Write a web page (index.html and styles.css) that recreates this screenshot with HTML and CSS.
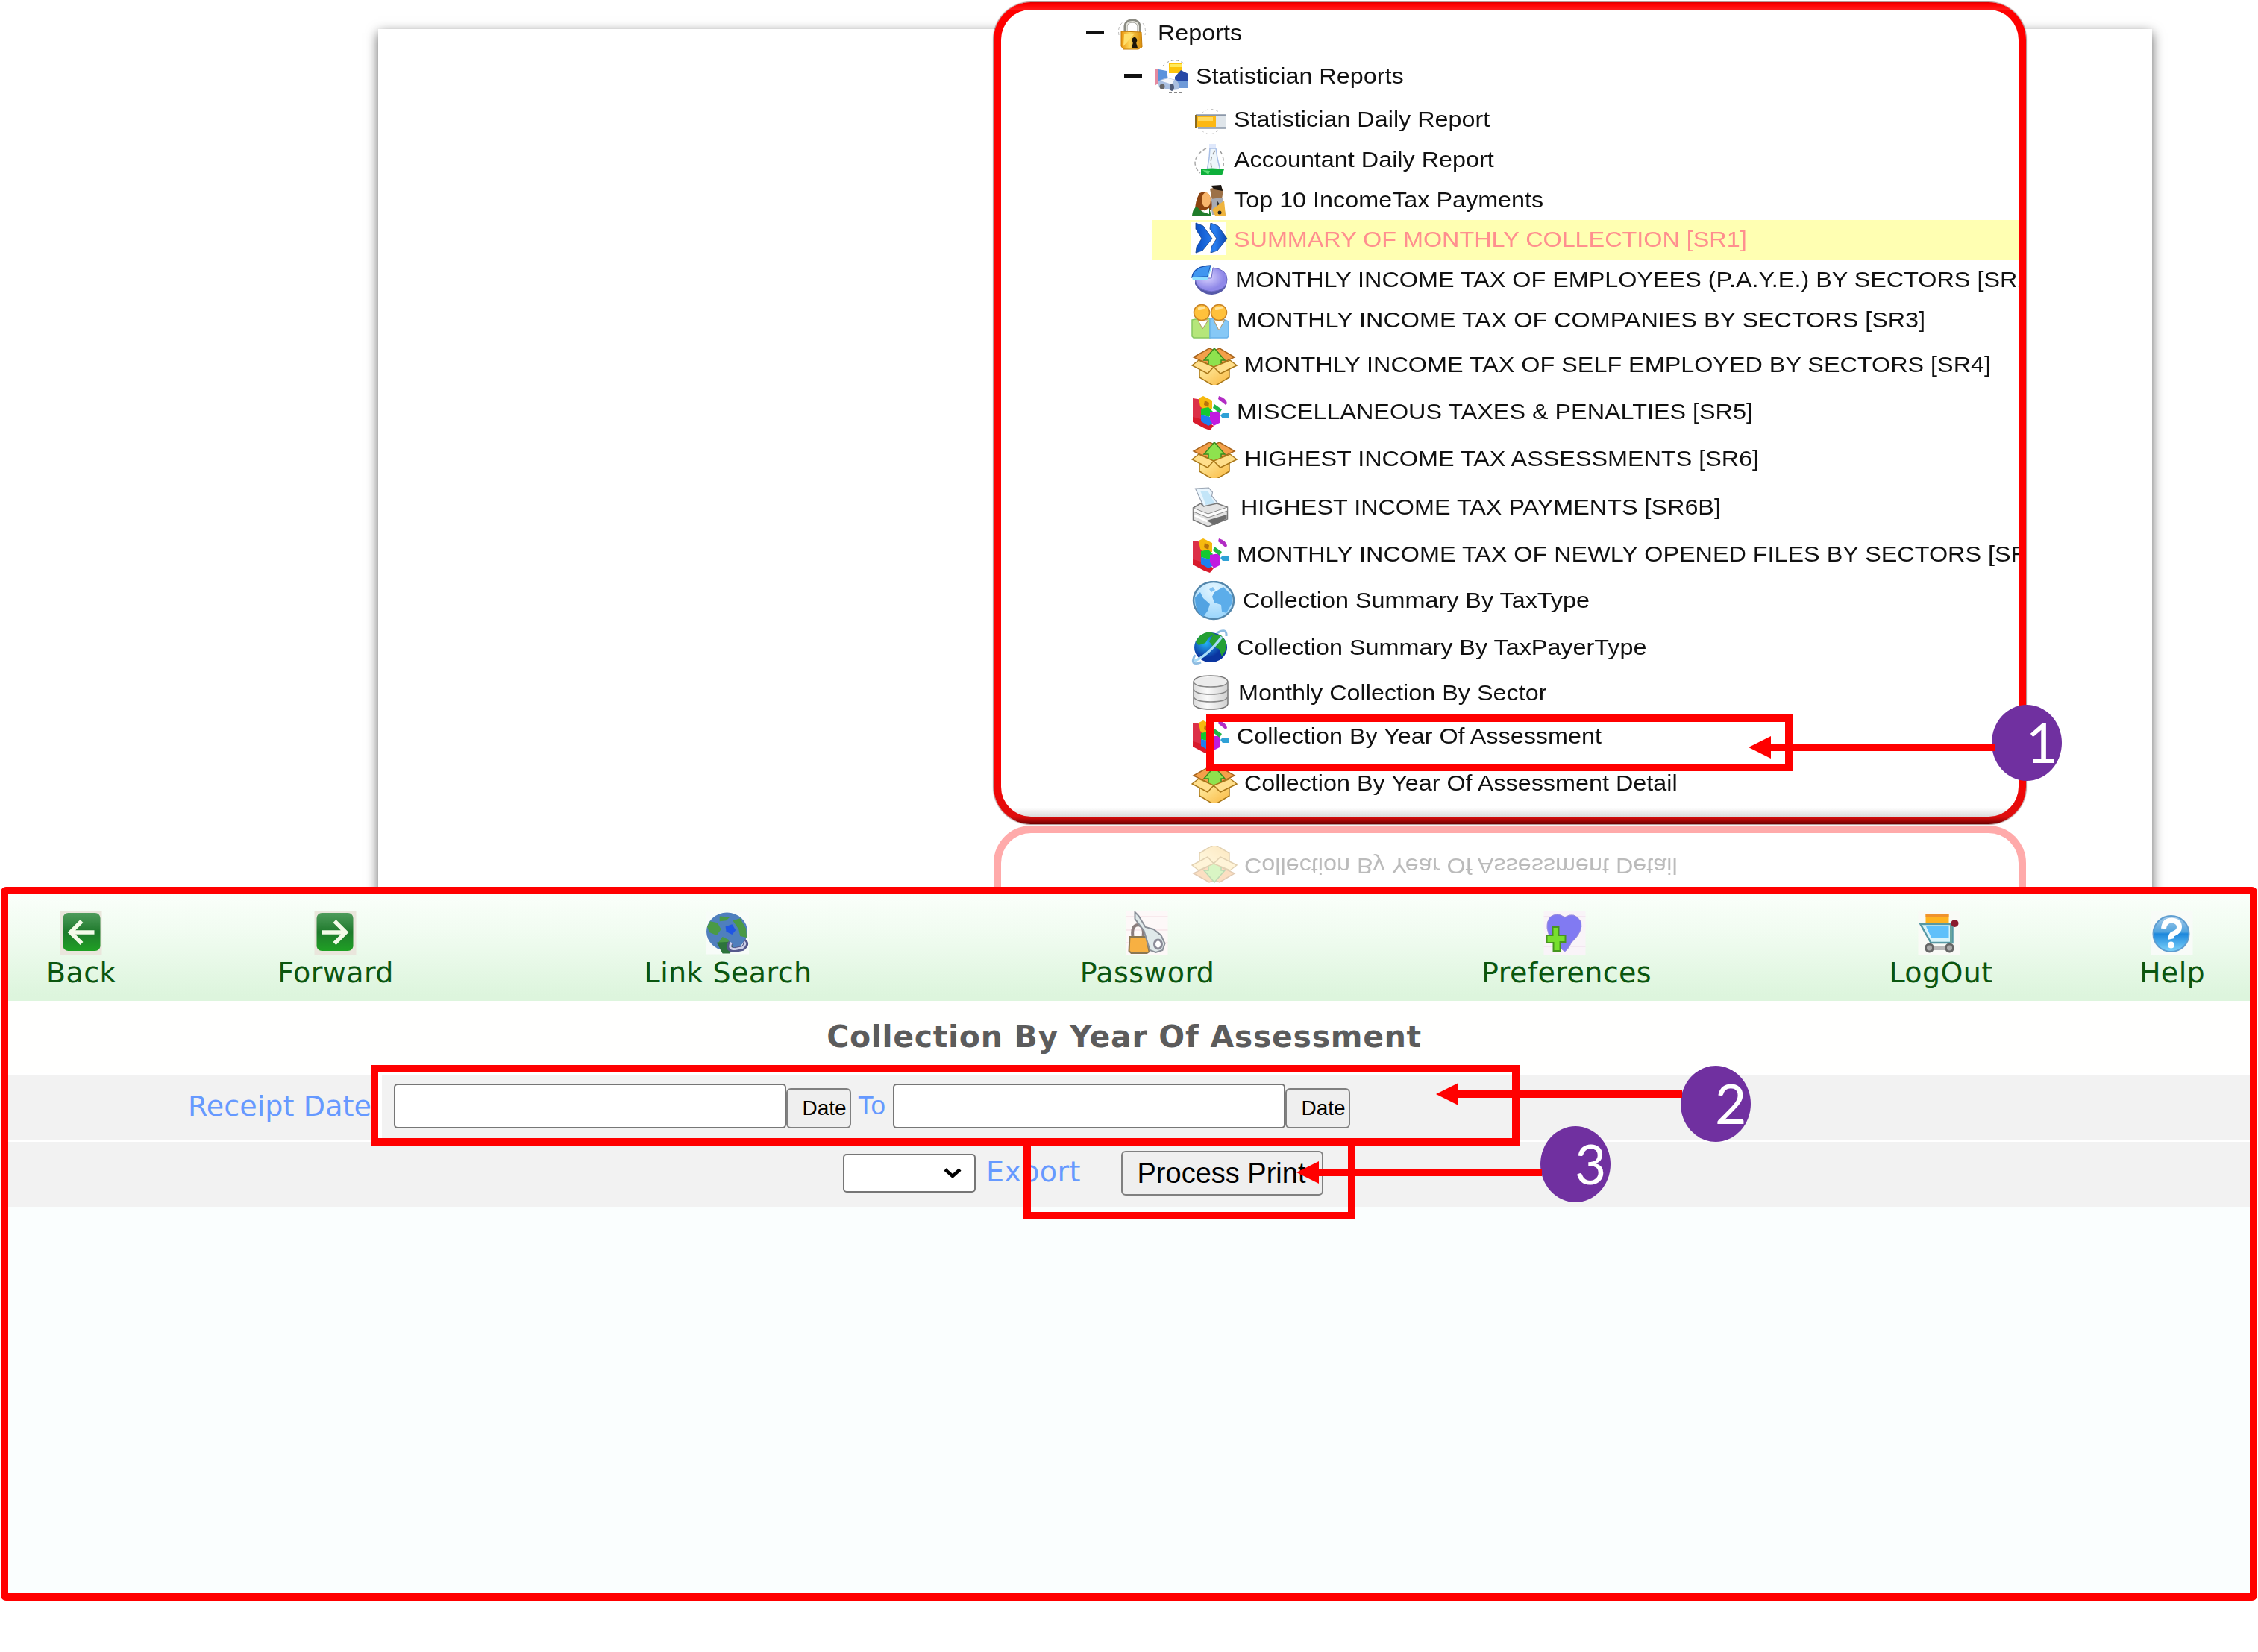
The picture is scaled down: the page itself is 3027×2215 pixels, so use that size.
FILE: index.html
```html
<!DOCTYPE html>
<html lang="en">
<head>
<meta charset="utf-8">
<title>Collection By Year Of Assessment</title>
<link rel="stylesheet" href="styles.css">
</head>
<body>
<svg class="defs" width="0" height="0" aria-hidden="true">
  <defs>
    <linearGradient id="gold" x1="0" x2="1"><stop offset="0" stop-color="#e9930c"/><stop offset=".4" stop-color="#ffd75a"/><stop offset="1" stop-color="#d98a06"/></linearGradient>
    <linearGradient id="box" x1="0" y1="0" x2="1" y2="1"><stop offset="0" stop-color="#fff0a8"/><stop offset="1" stop-color="#f9b53c"/></linearGradient>
    <linearGradient id="blue" x1="0" y1="0" x2="1" y2="0"><stop offset="0" stop-color="#0a4fc4"/><stop offset=".6" stop-color="#2a7ff0"/><stop offset="1" stop-color="#0b46b0"/></linearGradient>
    <radialGradient id="pie" cx=".4" cy=".4"><stop offset="0" stop-color="#d9d2ff"/><stop offset="1" stop-color="#8f88e8"/></radialGradient>
    <radialGradient id="sky" cx=".5" cy=".2" r=".9"><stop offset="0" stop-color="#e4f6ff"/><stop offset="1" stop-color="#8fd0fb"/></radialGradient>
    <radialGradient id="sea" cx=".35" cy=".35"><stop offset="0" stop-color="#27b4f5"/><stop offset="1" stop-color="#0a35a0"/></radialGradient>
    <linearGradient id="drum"><stop offset="0" stop-color="#dcdcdc"/><stop offset=".4" stop-color="#fafafa"/><stop offset="1" stop-color="#cfcfcf"/></linearGradient>
    <linearGradient id="green" x1="0" y1="0" x2="0" y2="1"><stop offset="0" stop-color="#4f9c5c"/><stop offset=".5" stop-color="#1f7a2c"/><stop offset="1" stop-color="#1fa024"/></linearGradient>
    <linearGradient id="help" x1="0" y1="0" x2="0" y2="1"><stop offset="0" stop-color="#a9cdea"/><stop offset=".45" stop-color="#4fa2de"/><stop offset=".5" stop-color="#1c87dc"/><stop offset="1" stop-color="#7fd4fb"/></linearGradient>
  </defs>
  <symbol id="i-lock" viewBox="0 0 40 54">
    <path d="M11 28V18Q12 11 20 11T29 18V28" fill="none" stroke="#8b8b83" stroke-width="5"/><path d="M12 27V18Q13 12 20 12T28 18V27" fill="none" stroke="#e4e4dc" stroke-width="2"/>
    <path d="M2 30Q0 18 7 13M34 14q5 8 3 16" fill="none" stroke="#bbb" stroke-dasharray="4 3"/>
    <path d="M5 25l27 1 1 20-5 3H8l-3-4z" fill="url(#gold)" stroke="#c47d08"/><path d="M8 45l14-16h-13z" fill="#ffdf6c"/>
    <path d="M22 33a4 4 0 0 1 3 7l2 7h-8l2-7a4 4 0 0 1 1-7z" fill="#1d1608"/>
  </symbol>
  <symbol id="i-car" viewBox="0 0 48 54">
    <path d="M11 14Q25 0 40 10" fill="none" stroke="#999" stroke-dasharray="4 3"/><path d="M20 9h18v14H20z" fill="#fcc40c"/><path d="M22 11h15v4H22z" fill="#ffe95c"/>
    <path d="M1 17l16 3 2 12-15 6z" fill="#5b93dc"/><path d="M1 18h4v19l-4 3z" fill="#e58aa0"/>
    <path d="M28 28l8-9 10 5v16H28z" fill="#2748a6"/><path d="M31 33h15v10H31z" fill="#6f9ad8"/><path d="M5 34l11-5 14 3 3 5v8l-9 1-17-4z" fill="#a9bfe0"/><path d="M8 33l11-3 8 2-3 6z" fill="#f5f8fc"/>
    <circle cx="11" cy="41" r="3.500" fill="#666"/><ellipse cx="24" cy="42" rx="3" ry="5" fill="#4d5a77"/><path d="M20 49h22" stroke="#888" stroke-dasharray="4 3" stroke-width="2"/>
  </symbol>
  <symbol id="i-card" viewBox="0 0 48 54">
    <path d="M14 19Q24 9 37 17M14 42Q26 52 36 41" fill="none" stroke="#bbb" stroke-dasharray="3 4"/>
    <rect x="6" y="21" width="41" height="18" fill="#dfe5ea"/><path d="M6 21.500h41M9 38.500h38" stroke="#8b97a8" stroke-width="2.500"/><rect x="7" y="23" width="26" height="14" fill="#fdb813"/><path d="M9 24h20v5H9z" fill="#ffd95e"/><path d="M6 21v17" stroke="#8b6b20" stroke-width="2"/>
  </symbol>
  <symbol id="i-flask" viewBox="0 0 48 54">
    <path d="M20 12Q5 20 5 32q1 8 7 13" fill="none" stroke="#aaa" stroke-width="1.500" stroke-dasharray="5 3"/><path d="M24 6h9v7h-9z" fill="#dfe8fb"/><path d="M25 12l-1 13-3 17h18l-4-17-2-13z" fill="#eef6fb" stroke="#a9bfe6" stroke-width="1.500"/><path d="M32 15q-9 12-4 24M38 15q6 6 5 20" stroke="#999" stroke-width="1.500" fill="none" stroke-dasharray="6 3"/>
    <path d="M13 40q14-3 31 0l-3 8H13z" fill="#0eaf3b"/><path d="M15 41l10 1-2 5z" fill="#5ade75"/>
  </symbol>
  <symbol id="i-people" viewBox="0 0 48 54">
    <path d="M25 12l14-3 4 5-2 12-13 2z" fill="#9c7147"/><path d="M26 8l14-1 2 8-11-2z" fill="#1c1712"/><path d="M25 26l17-2 4 23H28z" fill="#a7aab2"/><path d="M34 27l4 6-3 10z" fill="#333"/>
    <path d="M11 18q7-4 13 2 5 9 3 20l-22 2q0-13 6-24z" fill="#8c4310"/><ellipse cx="20" cy="27" rx="6" ry="10" fill="#f8b66c"/><path d="M1 48q1-9 6-12l8 7 9-5 3 10z" fill="#1f7c2a"/><path d="M15 43l5-3 4-2v8z" fill="#fff"/><path d="M28 40l16-12 2 20H32z" fill="#efb43e"/><circle cx="38" cy="44" r="2.500" fill="#222"/>
  </symbol>
  <symbol id="i-chevrons" viewBox="0 0 48 54">
    <path d="M0 4h47v44H0z" fill="#fff"/><path d="M6 5l10 4 12 17-13 16-9 3 1-8 7-11-8-13zM26 5l10 4 12 17-13 16-9 3 1-8 7-11-9-13z" fill="url(#blue)" stroke="#123e88" stroke-width=".8"/>
  </symbol>
  <symbol id="i-pie" viewBox="0 0 50 54">
    <path d="M5 28v5q8 14 23 14 20-2 20-20v-4z" fill="#5659a8"/><path d="M29 11q19 2 19 16 0 14-21 16Q6 41 5 25h22z" fill="url(#pie)" stroke="#6d6bc4"/><path d="M1 24Q3 9 26 8l-4 15z" fill="#3f96f0" stroke="#1c50ae" stroke-width="1.500"/><path d="M1 24l21-1 4-14v6l-4 12-20 1z" fill="#8fe0ff"/>
  </symbol>
  <symbol id="i-pair" viewBox="0 0 52 54">
    <path d="M1 27l10-2h14v26H3l-2-2z" fill="#b5e67a" stroke="#86c860" stroke-width="1.500" /><path d="M25 25h15l10 4v20l-2 2H25z" fill="#86c8f6" stroke="#69b2ea" stroke-width="1.500"/><path d="M9 27l6 12 8-12zM30 27l7 14 8-14z" fill="#fff" stroke="#b0925e"/>
    <circle cx="14" cy="17" r="10.500" fill="#ffc13c" stroke="#c98324" stroke-width="1.500"/><circle cx="37" cy="17" r="10.500" fill="#ffc13c" stroke="#c98324" stroke-width="1.500"/><path d="M9 12l10-2M32 12l10-2" stroke="#ffe39a" stroke-width="3"/>
  </symbol>
  <symbol id="i-box" viewBox="0 0 62 54">
    <path d="M3 17l21-12 7 3 7-3 20 12-28 13z" fill="#f3a04a" stroke="#a8641c" stroke-width="1.500"/><path d="M11 28h40v16L31 56 11 44z" fill="url(#box)" stroke="#a97718" stroke-width="1.500"/>
    <path d="M31 5L45 21h-5v10H23V21h-6z" fill="#8ee24e" stroke="#3b8a1e" stroke-width="1.500"/><path d="M1 28l9-7 20 9-8 9zM61 28l-9-7-22 9 9 9z" fill="#ffdf8c" stroke="#a97718" stroke-width="1.500"/>
  </symbol>
  <symbol id="i-blocks" viewBox="0 0 52 54">
    <path d="M2 9l13 2v36L2 40z" fill="#dc3048"/><path d="M2 34l18 5 10 7-5 6-8-3-15-8z" fill="#d81a2c"/><path d="M10 9l6-3 12 6v12l-8 3-8-7z" fill="#f6b90e"/><path d="M18 12l6 3-1 6-6-3z" fill="#b5720c"/><path d="M13 23l10-2 6 6-5 7-11-3z" fill="#14c930"/><path d="M13 31l12 3 5 8-7 4-10-6z" fill="#1e7ff0"/><path d="M25 28l13-2v16l-8 4-5-8z" fill="#c01be0"/><path d="M31 17l10 7-3 5-9-7z" fill="#20b648"/><path d="M37 6q10 3 11 10l-2 2-10-8z" fill="#b22cc4"/><path d="M42 29h9v7h-9l-3-4z" fill="#2fa1d6"/>
  </symbol>
  <symbol id="i-printer" viewBox="0 0 56 54">
    <path d="M5 2l18-1 5 6-1 5 9 11-19 5z" fill="#eaf6fe" stroke="#9aa5b4" stroke-width="1.200"/><path d="M12 6h10l9 16-12 2z" fill="#c3e5f8"/><path d="M2 28l10-6 4 4 18-4 14 5v16L22 53 2 44z" fill="#e3e3e3" stroke="#777" stroke-width="1.500"/><path d="M2 28l20 8 26-9v5l-26 9L2 33z" fill="#fafafa" stroke="#888"/><path d="M20 45l27-8v5L31 51z" fill="#6d6d6d"/><path d="M4 38l17 8" stroke="#fff" stroke-width="3"/>
  </symbol>
  <symbol id="i-globe" viewBox="0 0 60 54">
    <ellipse cx="30" cy="27" rx="27" ry="25" fill="url(#sky)" stroke="#5487ac" stroke-width="2.500"/><path d="M5 23l7-7 4 8 9 8-3 9-6 8Q5 42 5 23z" fill="#52a3e2"/><path d="M31 16l12-7 11 11 1 10-8 14-6-2-1-9-9-3-3-8z" fill="#5cadea"/><path d="M24 12l5-3 3 4-5 3z" fill="#7fc0f2"/>
  </symbol>
  <symbol id="i-planet" viewBox="0 0 52 54">
    <ellipse cx="26" cy="27" rx="22" ry="20" fill="url(#sea)"/><path d="M6 20q5-12 18-14l8 3-9 5-4 7-9 3zM30 9l10 2 7 9-1 11-5 8-4-10-8-3-5-7z" fill="#25a034"/><path d="M4 45Q20 40 41 13" fill="none" stroke="#a9dcf7" stroke-width="3.500"/><path d="M5 37Q-3 53 13 47M34 8q14-8 13 4" fill="none" stroke="#8fbde2" stroke-width="3"/>
  </symbol>
  <symbol id="i-db" viewBox="0 0 54 54">
    <path d="M3 12Q5 4 26 4t23 8v30q-2 7-23 7T3 42z" fill="url(#drum)" stroke="#777" stroke-width="1.500"/><path d="M3 12q2 7 23 7t23-7M3 22q2 7 23 7t23-7M3 32q2 7 23 7t23-7" fill="none" stroke="#888" stroke-width="1.500"/><ellipse cx="26" cy="12" rx="22" ry="6" fill="#ececec"/>
  </symbol>
</svg>

<main class="page">
  <section class="stage">
    <div class="sheet"></div>
    <div class="tree-column">
      <nav class="panel">
        <ul class="tree">
          <li class="node level-1"><i class="minus"></i><svg class="icon w40"><use href="#i-lock"/></svg><span class="label">Reports</span></li>
          <li class="node level-2"><i class="minus"></i><svg class="icon w48"><use href="#i-car"/></svg><span class="label">Statistician Reports</span></li>
          <li class="node"><svg class="icon w48"><use href="#i-card"/></svg><span class="label">Statistician Daily Report</span></li>
          <li class="node"><svg class="icon w48"><use href="#i-flask"/></svg><span class="label">Accountant Daily Report</span></li>
          <li class="node"><svg class="icon w48"><use href="#i-people"/></svg><span class="label">Top 10 IncomeTax Payments</span></li>
          <li class="node selected"><svg class="icon w48"><use href="#i-chevrons"/></svg><span class="label">SUMMARY OF MONTHLY COLLECTION [SR1]</span></li>
          <li class="node"><svg class="icon w50"><use href="#i-pie"/></svg><span class="label">MONTHLY INCOME TAX OF EMPLOYEES (P.A.Y.E.) BY SECTORS [SR2]</span></li>
          <li class="node"><svg class="icon w52"><use href="#i-pair"/></svg><span class="label">MONTHLY INCOME TAX OF COMPANIES BY SECTORS [SR3]</span></li>
          <li class="node"><svg class="icon w62"><use href="#i-box"/></svg><span class="label">MONTHLY INCOME TAX OF SELF EMPLOYED BY SECTORS [SR4]</span></li>
          <li class="node"><svg class="icon w52"><use href="#i-blocks"/></svg><span class="label">MISCELLANEOUS TAXES &amp; PENALTIES [SR5]</span></li>
          <li class="node"><svg class="icon w62"><use href="#i-box"/></svg><span class="label">HIGHEST INCOME TAX ASSESSMENTS [SR6]</span></li>
          <li class="node"><svg class="icon w56"><use href="#i-printer"/></svg><span class="label">HIGHEST INCOME TAX PAYMENTS [SR6B]</span></li>
          <li class="node"><svg class="icon w52"><use href="#i-blocks"/></svg><span class="label">MONTHLY INCOME TAX OF NEWLY OPENED FILES BY SECTORS [SR7]</span></li>
          <li class="node"><svg class="icon w60"><use href="#i-globe"/></svg><span class="label">Collection Summary By TaxType</span></li>
          <li class="node"><svg class="icon w52"><use href="#i-planet"/></svg><span class="label">Collection Summary By TaxPayerType</span></li>
          <li class="node"><svg class="icon w54"><use href="#i-db"/></svg><span class="label">Monthly Collection By Sector</span></li>
          <li class="node"><svg class="icon w52"><use href="#i-blocks"/></svg><span class="label">Collection By Year Of Assessment</span></li>
          <li class="node"><svg class="icon w62"><use href="#i-box"/></svg><span class="label">Collection By Year Of Assessment Detail</span></li>
        </ul>
      </nav>
      <div class="reflection" aria-hidden="true">
        <div class="panel-mirror">
          <div class="node"><svg class="icon w62"><use href="#i-box"/></svg><span class="label">Collection By Year Of Assessment Detail</span></div>
        </div>
      </div>
    </div>
  </section>

  <section class="window">
    <nav class="toolbar">
      <a class="tool"><svg class="tool-icon" viewBox="0 0 56 58"><path d="M0 0h56v58H0z" fill="#eae6dc"/><rect x="4" y="2" width="50" height="51" rx="7" fill="url(#green)"/><path d="M46 28H15M29 13L14 28l15 15" fill="none" stroke="#f4fbe9" stroke-width="5.500"/></svg><span>Back</span></a>
      <a class="tool"><svg class="tool-icon" viewBox="0 0 56 58"><path d="M0 0h56v58H0z" fill="#eae6dc"/><rect x="3" y="2" width="49" height="51" rx="7" fill="url(#green)"/><path d="M10 28h32M27 13l15 15-15 15" fill="none" stroke="#f4fbe9" stroke-width="5.500"/></svg><span>Forward</span></a>
      <a class="tool"><svg class="tool-icon" viewBox="0 0 58 58"><path d="M0 0h58v58H0z" fill="#f7fcf8"/><ellipse cx="28" cy="27" rx="28" ry="26" fill="#4f7fbd"/><path d="M5 13l10 2 5 9-6 8-10-4-3-8zM18 6l14 1-5 5-9 1zM36 12l10-3 8 14 1 12-9-2-2-9zM22 34l8 4 4 11-12 2-7-7z" fill="#4a9a46"/><path d="M26 20l9-3 5 8-5 6-8-4z" fill="#1f55e4"/><path d="M14 42l18-1 5 8-5 8H22z" fill="#2d743c"/><path d="M33 42q-6 10 6 10l10-2q8-6 2-10" fill="none" stroke="#56598c" stroke-width="7"/><path d="M34 42q-5 9 5 9l10-2q6-5 2-8" fill="none" stroke="#cfd2ea" stroke-width="3"/></svg><span>Link Search</span></a>
      <a class="tool"><svg class="tool-icon" viewBox="0 0 56 58"><path d="M0 0h56v58H0z" fill="#fdf8f8"/><path d="M0 7h56M0 25h56M0 42h56" stroke="#f3dbe1"/><path d="M9 33q-2-15 8-15 8 2 6 15" fill="none" stroke="#8b7d7d" stroke-width="4"/><path d="M5 34h22l4 20-3 2H7l-3-3z" fill="#f7b042" stroke="#8a7752" stroke-width="2"/><path d="M12 1l5 5 9 15 11 3 10 8 5 11-3 9-9 3-8-3-8-26-12-16z" fill="#e0e9ea" stroke="#8a8f98" stroke-width="2"/><ellipse cx="43" cy="44" rx="5" ry="6" fill="#fff" stroke="#8b8b98" stroke-width="3"/></svg><span>Password</span></a>
      <a class="tool"><svg class="tool-icon shift" viewBox="0 0 56 58"><path d="M0 0h56v58H0z" fill="#f9f4f8"/><path d="M0 7h56M0 47h56" stroke="#eed9ea"/><path d="M28 8Q18 0 8 8q-9 13 4 32l16 14q4-2 9-12 16-15 13-28Q41-1 28 8z" fill="#817af2" stroke="#9c8edc"/><path d="M12 21h8v11h9v9h-7v12h-9V42H4V32h8z" fill="#78e02e" stroke="#47951f" stroke-width="2"/></svg><span>Preferences</span></a>
      <a class="tool"><svg class="tool-icon shift" viewBox="0 0 56 58"><path d="M0 0h56v58H0z" fill="#f9faf6"/><path d="M10 4h31v13H10z" fill="#ffb320"/><path d="M10 4h31v3H10z" fill="#ef922d"/><path d="M3 17h43v25H17z" fill="#d8f4fa" stroke="#5698a4" stroke-width="2.500"/><path d="M10 19h31v17H18z" fill="#5fc0fa"/><path d="M44 43V18" stroke="#6aa4a0" stroke-width="3"/><circle cx="49" cy="16" r="5" fill="#8b1a2e"/><path d="M16 46h26v6H16z" fill="#b8b8b8"/><circle cx="15" cy="49" r="5" fill="#aaa" stroke="#666" stroke-width="3"/><circle cx="42" cy="49" r="5" fill="#aaa" stroke="#666" stroke-width="3"/></svg><span>LogOut</span></a>
      <a class="tool"><svg class="tool-icon" viewBox="0 0 56 58"><path d="M0 0h56v58H0z" fill="#f8fbf8"/><ellipse cx="27" cy="30" rx="24" ry="24" fill="url(#help)" stroke="#5e9dd0" stroke-width="2"/><path d="M17 23q1-11 11-11 10 1 10 9 0 6-8 9-4 2-3 7" fill="none" stroke="#fff" stroke-width="7"/><circle cx="27" cy="45" r="4.500" fill="#fff"/></svg><span>Help</span></a>
    </nav>
    <h1 class="title">Collection By Year Of Assessment</h1>
    <form class="filters">
      <div class="filter-row date-row">
        <label class="field-label">Receipt Date</label>
        <div class="date-cell">
          <input class="date-input" type="text"><button class="date-button" type="button">Date</button>
          <span class="to">To</span>
          <input class="date-input" type="text"><button class="date-button" type="button">Date</button>
        </div>
      </div>
      <div class="filter-row export-row">
        <div class="select"><svg viewBox="0 0 26 16" width="26" height="16"><path d="M3 3l10 9L23 3" fill="none" stroke="#000" stroke-width="4.500"/></svg></div>
        <label class="export">Export</label>
        <button class="print-button" type="button">Process Print</button>
      </div>
    </form>
  </section>

  <!-- Step annotations over both screens -->
  <div class="marker mark-3"></div>
  <div class="marker mark-2"></div>
  <div class="marker mark-1"></div>
  <div class="step step-1">1</div>
  <div class="step step-2">2</div>
  <div class="step step-3">3</div>
  <div class="arrow arrow-1"></div>
  <div class="arrow arrow-2"></div>
  <div class="arrow arrow-3"></div>
</main>
</body>
</html>
```
FILE: styles.css
```css
* { box-sizing: border-box; }
body { margin: 0; background: #fff; font-family: "Liberation Sans", Arial, sans-serif; }
.defs { position: absolute; }
symbol { overflow: visible; }
.page { position: relative; width: 3027px; height: 2215px; overflow: hidden; }

/* Report tree */
.stage { display: grid; height: 1189px; overflow: hidden; }
.sheet { grid-area: 1 / 1; width: 2378px; height: 1300px; margin: 39px 0 0 507px; background: #fff; box-shadow: 0 5px 15px rgba(0, 0, 0, .62); }
.tree-column { grid-area: 1 / 1; width: 1384px; margin: 3px 0 0 1332px; }
.panel {
  height: 1102px; border: 10px solid transparent; border-radius: 50px; overflow: hidden;
  background:
    linear-gradient(#fff 0, #fff calc(100% - 12px), #dcdcdc) padding-box,
    linear-gradient(#d00 0, #f00 3px, #ff1c1c 10px, #f00 11px, #f00 1030px, #de0d0d 1092px, #c00b0b 1095px, #6c0000 1102px) border-box;
  box-shadow: 0 0 1px 1px rgba(90, 30, 30, .5);
}
.tree {
  display: grid; margin: 0; padding: 4px 0 0; list-style: none;
  grid-template-rows: 58.3px 58.3px 54px 53.7px 53.3px 53.7px 53.7px 60.6px 62.7px 62.7px 65.3px 62.7px 62.6px 62.4px 61px 58.3px 63px 54px;
}
.node {
  display: flex; align-items: center; gap: 9px; height: 53.4px; margin-left: 203px; padding-left: 52px;
  color: #111; font-size: 30px; white-space: nowrap; overflow: hidden;
}
.level-1 { margin-left: 114px; padding-left: 0; gap: 18px; }
.level-2 { margin-left: 165px; padding-left: 0; gap: 8px; }
.level-2 .minus { margin-right: 8px; }
.selected { background: #ffffb2; color: #ff8f8f; }
.label { flex: none; transform: scaleX(1.078); transform-origin: 0 50%; }
.minus { width: 24px; height: 5px; background: #111; }
.icon { flex: none; height: 54px; overflow: visible; }
.level-1 .icon { margin-right: -4px; }
.w40 { width: 40px; }
.w48 { width: 48px; }
.w50 { width: 50px; }
.w52 { width: 52px; }
.w54 { width: 54px; }
.w56 { width: 57px; }
.w60 { width: 60px; }
.w62 { width: 62px; }

.reflection { height: 90px; margin-top: 2px; overflow: hidden; opacity: .33; }
.panel-mirror {
  display: flex; flex-direction: column; justify-content: flex-end; height: 200px; padding-bottom: 17px;
  border: 10px solid #f00; border-top: 0; border-radius: 0 0 50px 50px; background: #fff;
  transform: scaleY(-1); filter: blur(.7px);
}
.panel-mirror .node { color: #333; }

/* Application window */
.window { width: 3025px; height: 957px; margin-left: 1px; border: 10px solid #f00; border-radius: 7px; background: #fafefe; }
.toolbar {
  display: grid; grid-template-columns: 196px 486px 566px 558px 566px 438px 182px; height: 143px;
  background: linear-gradient(#fafffa, #f1fcf1 35%, #ddf5dd 95%);
}
.tool {
  display: flex; flex-direction: column; align-items: center; padding-top: 23px;
  color: #0b560f; font: 38px/44px "DejaVu Sans", Verdana, sans-serif; letter-spacing: .4px;
}
.tool span { margin-top: 2px; }
.tool-icon { width: 57px; height: 58px; margin-right: 1px; }
.tool-icon.shift { margin-right: 5px; }
.title {
  height: 96px; margin: 0; padding-right: 13px; background: #fffffe; text-align: center;
  color: #5c5c5c; font: bold 41px/96px "DejaVu Sans", Verdana, sans-serif; letter-spacing: .7px; white-space: nowrap;
}
.filters { display: flex; flex-direction: column; gap: 3px; margin: 0; padding-top: 3px; background: #fff; }
.filter-row { display: flex; height: 87px; color: #6699ff; }
.date-row { gap: 5px; }
.field-label { width: 496px; padding-right: 9px; background: #f2f2f2; text-align: right; font: 38px/85px "DejaVu Sans", Verdana, sans-serif; letter-spacing: .1px; }
.date-cell { display: flex; flex: 1; align-items: flex-end; padding: 0 0 15px 16px; background: #f2f2f2; }
.date-input { width: 526px; height: 60px; padding: 0 8px; border: 2px solid #767676; border-radius: 5px; background: #fff; font-size: 34px; }
.date-button { width: 87px; height: 54px; padding: 0 0 0 15px; border: 2px solid #808080; border-radius: 6px; background: #efefef; color: #000; font: 28px "Liberation Sans", Arial, sans-serif; }
.to { width: 56px; padding: 0 0 4px 9px; font-size: 35px; line-height: 54px; }
.export-row { align-items: center; padding: 0 0 3px 1119px; background: #f2f2f2; }
.select { display: flex; justify-content: flex-end; align-items: center; width: 178px; height: 52px; padding-right: 16px; border: 2px solid #767676; border-radius: 5px; background: #fff; }
.export { width: 178px; margin: -5px 0 0 14px; font: 38px "DejaVu Sans", Verdana, sans-serif; letter-spacing: .4px; }
.print-button { width: 271px; height: 60px; margin-left: 3px; padding: 0 2px 0 0; border: 2px solid #808080; border-radius: 6px; background: #efefef; color: #000; font: 38px "Liberation Sans", Arial, sans-serif; }

/* Step annotations */
.marker, .step, .arrow { position: absolute; }
.marker { border: 10px solid #f00; }
.mark-1 { left: 1617px; top: 958px; width: 786px; height: 76px; }
.mark-2 { left: 497px; top: 1428px; width: 1540px; height: 108px; }
.mark-3 { left: 1372px; top: 1527px; width: 445px; height: 108px; }
.step {
  width: 94px; height: 102px; padding-left: 46px; border-radius: 50%; background: #7030a0;
  color: #fff; font: 73px/101px Lato, sans-serif;
}
.step-1 { left: 2670px; top: 945px; }
.step-2 { left: 2253px; top: 1429px; }
.step-3 { left: 2065px; top: 1510px; }
.arrow { height: 30px; background: linear-gradient(#f00, #f00) 29px 50% / 100% 10px no-repeat; }
.arrow::before { content: ""; display: block; width: 30px; height: 30px; background: #f00; clip-path: polygon(0 50%, 100% 0, 100% 100%); }
.arrow-1 { left: 2344px; top: 987px; width: 331px; }
.arrow-2 { left: 1925px; top: 1452px; width: 330px; }
.arrow-3 { left: 1738px; top: 1557px; width: 329px; }
```
